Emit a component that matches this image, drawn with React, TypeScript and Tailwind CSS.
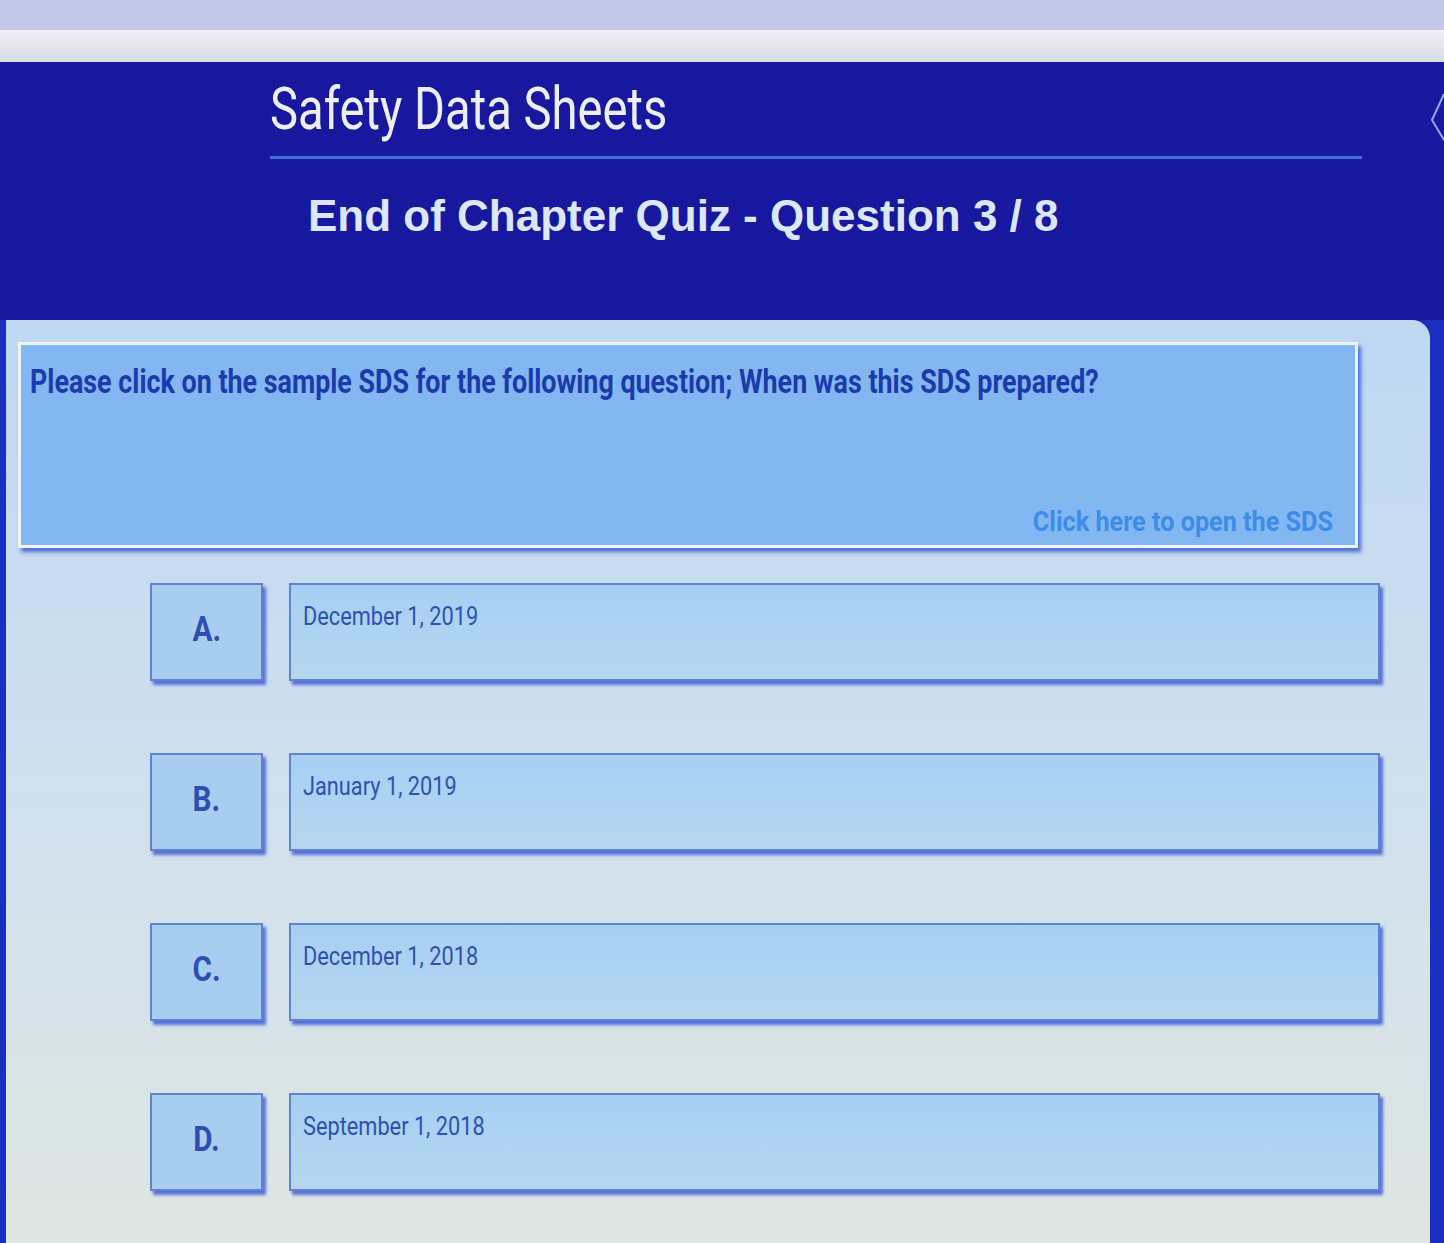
const options = [
  { letter: 'A.', text: 'December 1, 2019' },
  { letter: 'B.', text: 'January 1, 2019' },
  { letter: 'C.', text: 'December 1, 2018' },
  { letter: 'D.', text: 'September 1, 2018' },
];

export default function App() {
  return (
    <div className="flex h-[1243px] w-[1444px] flex-col overflow-hidden bg-[#1a2fc0] font-['Roboto',sans-serif]">
      {/* browser chrome strip above the course window */}
      <div className="h-[30px] shrink-0 bg-[#c3c7ea]" />
      <div className="h-[32px] shrink-0 bg-gradient-to-b from-[#f1f1f3] to-[#d9dbe6]" />

      {/* header */}
      <div className="relative h-[258px] shrink-0 bg-[#17189e] pl-[270px] pr-[82px] pt-[14px]">
        <h1 className="origin-left scale-x-[0.8] whitespace-nowrap text-[59px] leading-[66px] text-[#eceef8]">
          Safety Data Sheets
        </h1>
        <div className="mt-[14px] h-[3px] bg-[#3f70d8]" />
        <h2 className="mt-[32px] pl-[38px] font-['Liberation_Sans',Arial,sans-serif] text-[44px] font-bold leading-[50px] text-[#dce7fd]">
          End of Chapter Quiz - Question 3 / 8
        </h2>
        {/* next arrow peeking at right edge */}
        <svg className="absolute right-0 top-[30px]" width="16" height="80" viewBox="0 0 16 80">
          <path d="M16 2 L4 28 L16 48" fill="none" stroke="#8aa8f0" strokeWidth="2" />
        </svg>
      </div>

      {/* content panel */}
      <div className="flex min-h-0 flex-1 pl-[6px] pr-[14px]">
        <div className="flex min-w-0 flex-1 flex-col rounded-tr-[18px] bg-gradient-to-b from-[#bfd8f3] via-[#cfe0ee] to-[#dfe6e2] pl-[12px] pr-[72px] pt-[22px]">
          <div className="flex h-[206px] flex-col border-[3px] border-[#eef4fb] bg-[#82b7f1] pl-[9px] pr-[22px] pt-[16px] pb-[6px] shadow-[3px_4px_4px_#4c6ed6]">
            <p className="origin-left scale-x-[0.79] whitespace-nowrap text-[34px] font-bold leading-[40px] text-[#1b3aad]">
              Please click on the sample SDS for the following question; When was this SDS prepared?
            </p>
            <p className="mt-auto origin-right scale-x-[0.9] whitespace-nowrap text-right text-[28px] font-bold leading-[34px] text-[#3b8ceb]">
              Click here to open the SDS
            </p>
          </div>

          <div className="mt-[35px] flex flex-col gap-[72px] pl-[132px]">
            {options.map((o) => (
              <div key={o.letter} className="mr-[-22px] flex gap-[26px]">
                <div className="flex h-[98px] w-[113px] shrink-0 items-center justify-center border-2 border-[#5d84cf] bg-[#a9cdf0] pb-[4px] shadow-[3px_4px_3px_#5470d8]">
                  <span className="origin-center scale-x-[0.85] text-[35px] font-bold text-[#2c4fb3]">
                    {o.letter}
                  </span>
                </div>
                <div className="h-[98px] min-w-0 flex-1 border-2 border-[#5d84cf] bg-gradient-to-b from-[#a7cff4] to-[#b6d6ee] pl-[12px] pt-[17px] shadow-[3px_4px_3px_#5470d8]">
                  <p className="origin-left scale-x-[0.87] whitespace-nowrap text-[25px] leading-[30px] text-[#2b52b2]">
                    {o.text}
                  </p>
                </div>
              </div>
            ))}
          </div>
        </div>
      </div>
    </div>
  );
}
